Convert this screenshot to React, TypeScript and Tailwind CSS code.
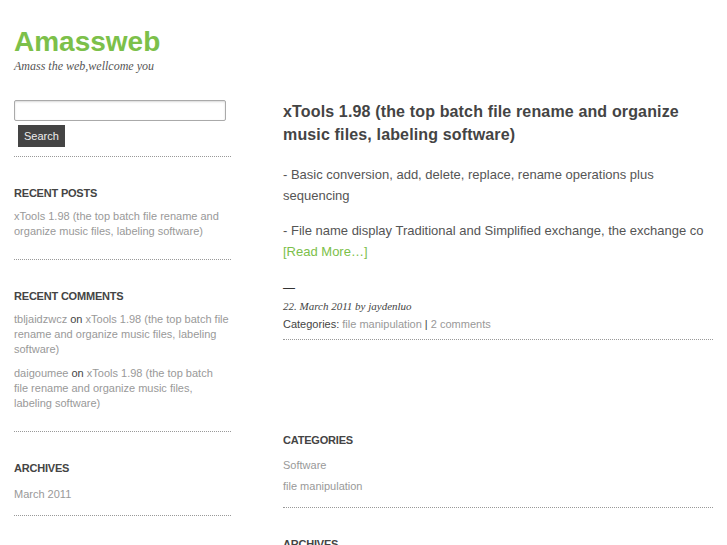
import type React from "react";

function Dots({ className = "" }: { className?: string }) {
	return <div className={`border-b border-dotted border-[#999] ${className}`} />;
}

function WidgetTitle({ children }: { children: React.ReactNode }) {
	return (
		<h2 className="text-[11px] font-bold uppercase text-[#444] leading-[15px] tracking-[-0.2px]">
			{children}
		</h2>
	);
}

export default function App() {
	return (
		<div className="min-h-[545px] bg-white font-['Liberation_Sans',Arial,sans-serif] pl-[14px] overflow-hidden">
			<header className="pt-[26px]">
				<h1 className="text-[28px] font-bold text-[#7cc04a] leading-[32px]">Amassweb</h1>
				<p className="mt-[1px] text-[12px] italic text-[#555] font-['Liberation_Serif',serif] leading-[14px]">
					Amass the web,wellcome you
				</p>
			</header>

			<div className="flex mt-[27px]">
				<aside className="w-[217px] shrink-0">
					<div>
						<input
							type="text"
							className="block w-[212px] h-[21px] border border-[#aaa] rounded-[2px] bg-white shadow-[inset_0_1px_2px_rgba(0,0,0,0.15)]"
						/>
						<button className="mt-[4px] ml-[4px] h-[22px] px-[6px] bg-[#444] text-[#eee] text-[11px] leading-[22px]">
							Search
						</button>
					</div>
					<Dots className="mt-[9px]" />

					<section className="mt-[29px]">
						<WidgetTitle>Recent Posts</WidgetTitle>
						<p className="mt-[8px] text-[11px] leading-[15px] text-[#999]">
							xTools 1.98 (the top batch file rename and organize music files, labeling software)
						</p>
						<Dots className="mt-[20px]" />
					</section>

					<section className="mt-[29px]">
						<WidgetTitle>Recent Comments</WidgetTitle>
						<p className="mt-[8px] text-[11px] leading-[15px] text-[#999]">
							tbljaidzwcz <span className="text-[#444]">on</span> xTools 1.98 (the top batch file
							rename and organize music files, labeling software)
						</p>
						<p className="mt-[9px] text-[11px] leading-[15px] text-[#999] pr-[8px]">
							daigoumee <span className="text-[#444]">on</span> xTools 1.98 (the top batch file
							rename and organize music files, labeling software)
						</p>
						<Dots className="mt-[20px]" />
					</section>

					<section className="mt-[29px]">
						<WidgetTitle>Archives</WidgetTitle>
						<p className="mt-[11px] text-[11px] leading-[15px] text-[#999]">March 2011</p>
						<Dots className="mt-[13px]" />
					</section>
				</aside>

				<main className="ml-[52px] w-[430px] shrink-0">
					<h2 className="text-[16px] font-bold text-[#444] leading-[23px] tracking-[0.15px]">
						xTools 1.98 (the top batch file rename and organize music files, labeling software)
					</h2>
					<p className="mt-[18px] text-[13px] text-[#555] leading-[21px]">
						- Basic conversion, add, delete, replace, rename operations plus sequencing
					</p>
					<p className="mt-[14px] text-[13px] text-[#555] leading-[21px] whitespace-nowrap">
						- File name display Traditional and Simplified exchange, the exchange co
					</p>
					<p className="text-[13px] leading-[21px] text-[#7cc04a]">[Read More…]</p>
					<p className="mt-[20px] text-[12px] leading-[13px] text-[#333]">—</p>
					<p className="mt-[4px] text-[11px] italic text-[#444] font-['Liberation_Serif',serif] leading-[14px]">
						22. March 2011 by jaydenluo
					</p>
					<p className="mt-[4px] text-[11px] leading-[15px] text-[#444]">
						Categories: <span className="text-[#999]">file manipulation</span> |{" "}
						<span className="text-[#999]">2 comments</span>
					</p>
					<Dots className="mt-[7px]" />

					<section className="mt-[93px]">
						<WidgetTitle>Categories</WidgetTitle>
						<p className="mt-[10px] text-[11px] leading-[15px] text-[#999]">Software</p>
						<p className="mt-[6px] text-[11px] leading-[15px] text-[#999]">file manipulation</p>
						<Dots className="mt-[13px]" />
					</section>

					<section className="mt-[29px]">
						<WidgetTitle>Archives</WidgetTitle>
					</section>
				</main>
			</div>
		</div>
	);
}
